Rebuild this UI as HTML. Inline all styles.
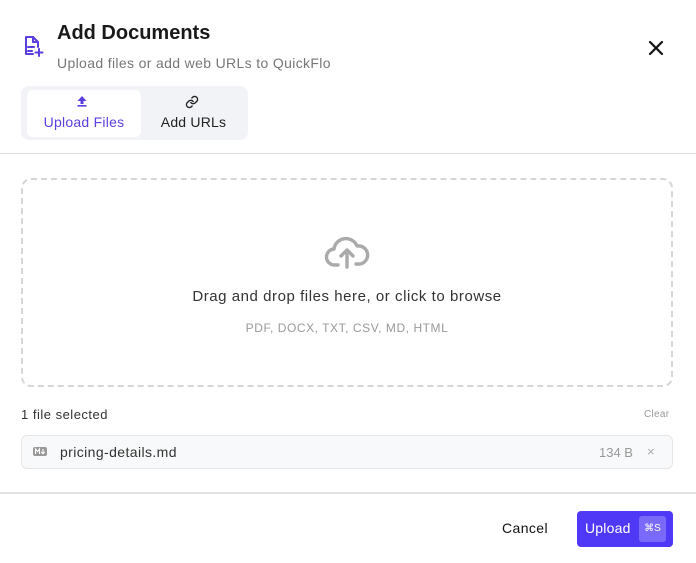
<!DOCTYPE html>
<html><head><meta charset="utf-8"><style>
*{box-sizing:border-box;margin:0;padding:0}
body{width:696px;height:563px;background:#fff;font-family:"Liberation Sans",sans-serif;position:relative;overflow:hidden;color:#1a1a1a}
.a{position:absolute}
</style></head><body>
<svg class="a" style="left:22px;top:34px" width="22" height="24" viewBox="0 0 22 24" fill="none" stroke="#5b3fe0" stroke-width="2" stroke-linecap="round" stroke-linejoin="round"><path d="M11 20H4V3h7l5 5v5"/><path d="M11 3v5h5"/><path d="M6 13h6M6 17h4"/><path d="M17 15v7M13.5 18.5h7"/></svg>
<div class="a" style="left:57px;top:22px;font-size:20px;font-weight:bold;color:#1a1a1a">Add Documents</div>
<div class="a" style="left:57px;top:55px;font-size:14px;color:#777;letter-spacing:0.35px">Upload files or add web URLs to QuickFlo</div>
<svg class="a" style="left:647px;top:39px" width="18" height="18" viewBox="0 0 18 18" stroke="#111" stroke-width="2.2" stroke-linecap="round"><path d="M3 3l12 12M15 3L3 15"/></svg>
<div class="a" style="left:21px;top:86px;width:227px;height:54px;background:#f2f3f6;border-radius:8px"></div>
<div class="a" style="left:27px;top:90px;width:114px;height:47px;background:#fff;border-radius:6px"></div>
<svg class="a" style="left:76px;top:95px" width="12" height="12" viewBox="0 0 12 12" fill="#5b3fe0"><path d="M6 1L1.5 6h3v3h3V6h3z"/><rect x="1.5" y="10" width="9" height="1.6"/></svg>
<div class="a" style="left:27px;top:114px;width:114px;text-align:center;font-size:14px;color:#5b3fe0;letter-spacing:0.25px">Upload Files</div>
<svg class="a" style="left:185px;top:95px" width="14" height="14" viewBox="0 0 24 24" fill="none" stroke="#222" stroke-width="2.4" stroke-linecap="round"><path d="M10 13a5 5 0 0 0 7.5.5l3-3a5 5 0 0 0-7-7l-1.7 1.7"/><path d="M14 11a5 5 0 0 0-7.5-.5l-3 3a5 5 0 0 0 7 7l1.7-1.7"/></svg>
<div class="a" style="left:141px;top:114px;width:105px;text-align:center;font-size:14px;color:#222;letter-spacing:0.2px">Add URLs</div>
<div class="a" style="left:0;top:153px;width:696px;height:1px;background:#e2e2e2"></div>
<div class="a" style="left:21px;top:178px;width:652px;height:209px;border:2px dashed #d6d6d6;border-radius:10px"></div>
<svg class="a" style="left:324px;top:234px" width="46" height="36" viewBox="0 0 46 36" fill="none" stroke="#aaa" stroke-width="3.4" stroke-linecap="round" stroke-linejoin="round"><path d="M14 31H11a8 8 0 0 1-1-16 12 12 0 0 1 23-3 9 9 0 0 1 3 18h-4"/><path d="M23 33V17M17 22l6-6 6 6"/></svg>
<div class="a" style="left:21px;top:288px;width:652px;text-align:center;font-size:15px;color:#333;letter-spacing:0.55px">Drag and drop files here, or click to browse</div>
<div class="a" style="left:21px;top:321px;width:652px;text-align:center;font-size:12px;color:#999;letter-spacing:0.55px">PDF, DOCX, TXT, CSV, MD, HTML</div>
<div class="a" style="left:21px;top:407px;font-size:13px;color:#333;letter-spacing:0.5px">1 file selected</div>
<div class="a" style="left:644px;top:409px;font-size:10px;color:#999;letter-spacing:0.3px">Clear</div>
<div class="a" style="left:21px;top:435px;width:652px;height:34px;background:#f8f9fa;border:1px solid #e6e6e6;border-radius:6px"></div>
<div class="a" style="left:33px;top:447px;width:14px;height:9px;background:#999;border-radius:2px"></div>
<svg class="a" style="left:33px;top:447px" width="14" height="9" viewBox="0 0 14 9" fill="none" stroke="#fff" stroke-width="1.1"><path d="M2.5 7V2l2 2.5 2-2.5v5M10 2v4.5M8.3 5l1.7 1.7L11.7 5"/></svg>
<div class="a" style="left:60px;top:444px;font-size:14px;color:#333;letter-spacing:0.4px">pricing-details.md</div>
<div class="a" style="left:599px;top:445px;font-size:13px;color:#999">134 B</div>
<div class="a" style="left:647px;top:444px;font-size:13px;color:#aaa">×</div>
<div class="a" style="left:0;top:492px;width:696px;height:2px;background:#e2e2e2"></div>
<div class="a" style="left:502px;top:520px;font-size:14px;color:#111;letter-spacing:0.4px">Cancel</div>
<div class="a" style="left:577px;top:511px;width:96px;height:36px;background:#4f39f6;border-radius:4px"></div>
<div class="a" style="left:585px;top:520px;font-size:14px;color:#fff;letter-spacing:0.2px">Upload</div>
<div class="a" style="left:639px;top:516px;width:27px;height:26px;background:#7a6af9;border-radius:3px;color:#fff;font-size:10px;line-height:26px;text-align:center;display:flex;align-items:center;justify-content:center">⌘S</div>
</body></html>
